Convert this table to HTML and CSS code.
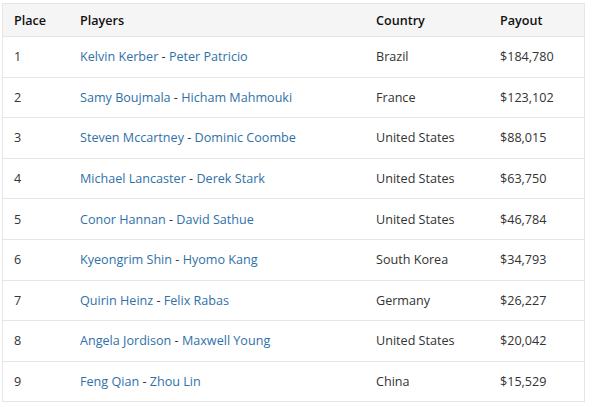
FILE: index.html
```html
<!DOCTYPE html>
<html>
<head>
<meta charset="utf-8">
<link rel="stylesheet" href="styles.css">
</head>
<body>
<div class="wrap">
<table class="results">
<thead>
<tr><th class="c-place">Place</th><th class="c-players">Players</th><th class="c-country">Country</th><th class="c-payout">Payout</th></tr>
</thead>
<tbody>
<tr><td>1</td><td><a href="#">Kelvin Kerber</a> - <a href="#">Peter Patricio</a></td><td>Brazil</td><td>$184,780</td></tr>
<tr><td>2</td><td><a href="#">Samy Boujmala</a> - <a href="#">Hicham Mahmouki</a></td><td>France</td><td>$123,102</td></tr>
<tr><td>3</td><td><a href="#">Steven Mccartney</a> - <a href="#">Dominic Coombe</a></td><td>United States</td><td>$88,015</td></tr>
<tr><td>4</td><td><a href="#">Michael Lancaster</a> - <a href="#">Derek Stark</a></td><td>United States</td><td>$63,750</td></tr>
<tr><td>5</td><td><a href="#">Conor Hannan</a> - <a href="#">David Sathue</a></td><td>United States</td><td>$46,784</td></tr>
<tr><td>6</td><td><a href="#">Kyeongrim Shin</a> - <a href="#">Hyomo Kang</a></td><td>South Korea</td><td>$34,793</td></tr>
<tr><td>7</td><td><a href="#">Quirin Heinz</a> - <a href="#">Felix Rabas</a></td><td>Germany</td><td>$26,227</td></tr>
<tr><td>8</td><td><a href="#">Angela Jordison</a> - <a href="#">Maxwell Young</a></td><td>United States</td><td>$20,042</td></tr>
<tr><td>9</td><td><a href="#">Feng Qian</a> - <a href="#">Zhou Lin</a></td><td>China</td><td>$15,529</td></tr>
</tbody>
</table>
</div>
</body>
</html>
```
FILE: styles.css
```css
html, body { margin: 0; padding: 0; background: #fff; }
.wrap { padding: 3px 0 0 2px; }
.results {
  width: 583px;
  border-collapse: collapse;
  font-family: "Open Sans", sans-serif;
  font-size: 12.6px;
  color: #333;
  border: 1px solid #e6e6e6;
}
.results th {
  background: #f5f5f5;
  font-weight: 600;
  color: #111;
  text-align: left;
  height: 32px;
  padding: 0 0 0 11px;
  border-bottom: 1px solid #e6e6e6;
}
.results td {
  height: 39.6px;
  padding: 0 0 0 11px;
  border-bottom: 1px solid #e6e6e6;
}
.c-place { width: 55px; }
.c-players { width: 285px; }
.c-country { width: 113px; }
.results a { color: #2f71a8; text-decoration: none; }
```
